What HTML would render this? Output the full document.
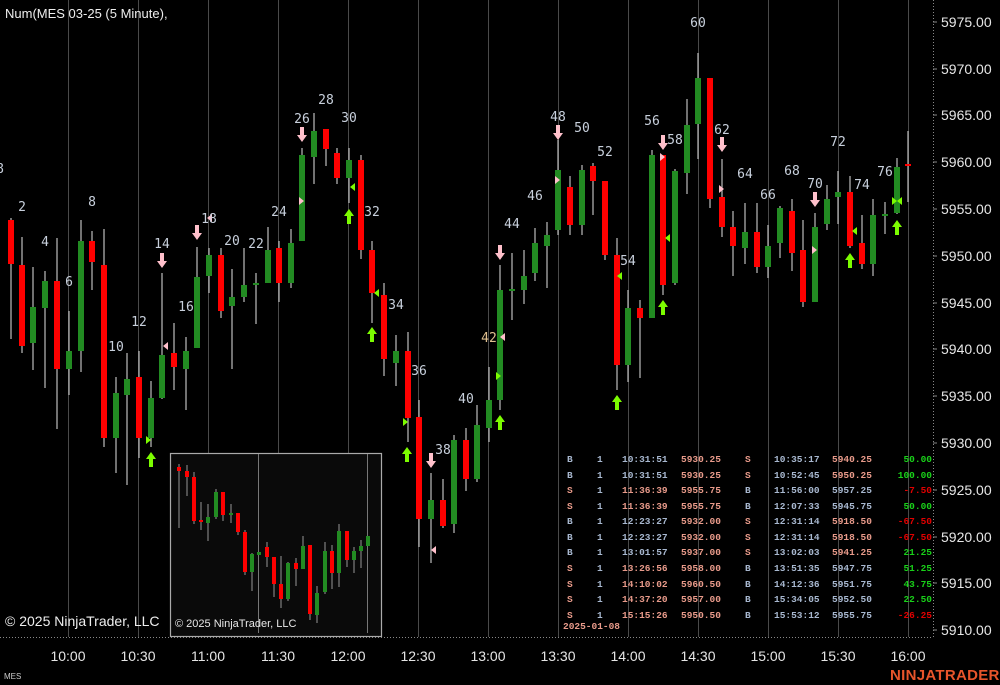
<!DOCTYPE html>
<html><head><meta charset="utf-8"><style>
html,body{margin:0;padding:0;background:#000;width:1000px;height:685px;overflow:hidden}
svg{display:block}
.l{font:13px "DejaVu Sans Mono","Liberation Mono",monospace;fill:#c8d0dc;text-anchor:middle}
.p{font:14px "Liberation Sans",sans-serif;fill:#e6e6e6}
.t{font:14px "Liberation Sans",sans-serif;fill:#e6e6e6;text-anchor:middle}
.tb{font:bold 9.5px "Liberation Mono",monospace}
.b{fill:#a8b8d0}.s{fill:#e89a8a}.g{fill:#19d019}.r{fill:#e00000}
</style></head><body>
<svg width="1000" height="685" viewBox="0 0 1000 685" xmlns="http://www.w3.org/2000/svg">
<defs>
<path id="dn" d="M-2,-8H2V0H5L0,7L-5,0H-2Z" fill="#ffc0cb"/>
<path id="up" d="M-2,8H2V0H5L0,-7L-5,0H-2Z" fill="#7cfc00"/>
<path id="rp" d="M0,-4L5,0L0,4Z"/>
<path id="lp" d="M0,-4L-5,0L0,4Z"/>
</defs>
<rect width="1000" height="685" fill="#000"/>
<g stroke="#4a4a4a" stroke-width="1">
<line x1="68.5" y1="0" x2="68.5" y2="637"/><line x1="138.5" y1="0" x2="138.5" y2="637"/><line x1="208.5" y1="0" x2="208.5" y2="637"/><line x1="278.5" y1="0" x2="278.5" y2="637"/><line x1="348.5" y1="0" x2="348.5" y2="637"/><line x1="418.5" y1="0" x2="418.5" y2="637"/><line x1="488.5" y1="0" x2="488.5" y2="637"/><line x1="558.5" y1="0" x2="558.5" y2="637"/><line x1="628.5" y1="0" x2="628.5" y2="637"/><line x1="698.5" y1="0" x2="698.5" y2="637"/><line x1="768.5" y1="0" x2="768.5" y2="637"/><line x1="838.5" y1="0" x2="838.5" y2="637"/><line x1="908.5" y1="0" x2="908.5" y2="637"/>
</g>
<g stroke="#bdbdbd" stroke-width="1.2">
<line x1="11" y1="218" x2="11" y2="339"/><line x1="22" y1="237" x2="22" y2="353"/><line x1="33" y1="267" x2="33" y2="370"/><line x1="45" y1="271" x2="45" y2="388"/><line x1="57" y1="238" x2="57" y2="429"/><line x1="69" y1="311" x2="69" y2="395"/><line x1="81" y1="220" x2="81" y2="372"/><line x1="92" y1="231" x2="92" y2="290"/><line x1="104" y1="229" x2="104" y2="447"/><line x1="116" y1="377" x2="116" y2="473"/><line x1="127" y1="353" x2="127" y2="485"/><line x1="139" y1="351" x2="139" y2="458"/><line x1="151" y1="381" x2="151" y2="447"/><line x1="162" y1="273" x2="162" y2="399"/><line x1="174" y1="323" x2="174" y2="390"/><line x1="186" y1="337" x2="186" y2="410"/><line x1="197" y1="247" x2="197" y2="348"/><line x1="209" y1="248" x2="209" y2="293"/><line x1="221" y1="248" x2="221" y2="318"/><line x1="232" y1="269" x2="232" y2="369"/><line x1="244" y1="248" x2="244" y2="302"/><line x1="256" y1="273" x2="256" y2="324"/><line x1="268" y1="227" x2="268" y2="283"/><line x1="279" y1="241" x2="279" y2="302"/><line x1="291" y1="229" x2="291" y2="288"/><line x1="302" y1="148" x2="302" y2="241"/><line x1="314" y1="113" x2="314" y2="184"/><line x1="326" y1="129" x2="326" y2="166"/><line x1="337" y1="148" x2="337" y2="184"/><line x1="349" y1="148" x2="349" y2="203"/><line x1="361" y1="155" x2="361" y2="259"/><line x1="372" y1="241" x2="372" y2="323"/><line x1="384" y1="283" x2="384" y2="376"/><line x1="396" y1="335" x2="396" y2="386"/><line x1="408" y1="332" x2="408" y2="442"/><line x1="419" y1="400" x2="419" y2="547"/><line x1="431" y1="473" x2="431" y2="563"/><line x1="443" y1="479" x2="443" y2="528"/><line x1="454" y1="435" x2="454" y2="533"/><line x1="466" y1="428" x2="466" y2="491"/><line x1="477" y1="405" x2="477" y2="482"/><line x1="489" y1="367" x2="489" y2="442"/><line x1="500" y1="265" x2="500" y2="410"/><line x1="512" y1="253" x2="512" y2="320"/><line x1="524" y1="250" x2="524" y2="304"/><line x1="535" y1="228" x2="535" y2="281"/><line x1="547" y1="222" x2="547" y2="288"/><line x1="558" y1="140" x2="558" y2="235"/><line x1="570" y1="176" x2="570" y2="235"/><line x1="582" y1="165" x2="582" y2="235"/><line x1="593" y1="163" x2="593" y2="215"/><line x1="605" y1="181" x2="605" y2="260"/><line x1="617" y1="238" x2="617" y2="390"/><line x1="628" y1="290" x2="628" y2="382"/><line x1="640" y1="300" x2="640" y2="378"/><line x1="652" y1="150" x2="652" y2="318"/><line x1="663" y1="155" x2="663" y2="295"/><line x1="675" y1="169" x2="675" y2="285"/><line x1="687" y1="99" x2="687" y2="194"/><line x1="698" y1="53" x2="698" y2="159"/><line x1="710" y1="78" x2="710" y2="208"/><line x1="722" y1="159" x2="722" y2="237"/><line x1="733" y1="211" x2="733" y2="276"/><line x1="745" y1="203" x2="745" y2="264"/><line x1="757" y1="203" x2="757" y2="273"/><line x1="768" y1="225" x2="768" y2="278"/><line x1="780" y1="206" x2="780" y2="258"/><line x1="792" y1="199" x2="792" y2="271"/><line x1="803" y1="220" x2="803" y2="307"/><line x1="815" y1="213" x2="815" y2="302"/><line x1="827" y1="185" x2="827" y2="230"/><line x1="838" y1="171" x2="838" y2="224"/><line x1="850" y1="176" x2="850" y2="248"/><line x1="862" y1="215" x2="862" y2="269"/><line x1="873" y1="199" x2="873" y2="276"/><line x1="885" y1="202" x2="885" y2="234"/><line x1="897" y1="158" x2="897" y2="214"/><line x1="908" y1="131" x2="908" y2="202"/>
</g>
<g>
<rect x="8" y="220" width="6" height="44" fill="#f00"/><rect x="19" y="265" width="6" height="81" fill="#f00"/><rect x="30" y="307" width="6" height="36" fill="#228b22"/><rect x="42" y="281" width="6" height="27" fill="#228b22"/><rect x="54" y="281" width="6" height="88" fill="#f00"/><rect x="66" y="351" width="6" height="18" fill="#228b22"/><rect x="78" y="241" width="6" height="110" fill="#228b22"/><rect x="89" y="241" width="6" height="21" fill="#f00"/><rect x="101" y="265" width="6" height="173" fill="#f00"/><rect x="113" y="393" width="6" height="45" fill="#228b22"/><rect x="124" y="379" width="6" height="16" fill="#228b22"/><rect x="136" y="377" width="6" height="61" fill="#f00"/><rect x="148" y="398" width="6" height="40" fill="#228b22"/><rect x="159" y="355" width="6" height="43" fill="#228b22"/><rect x="171" y="353" width="6" height="14" fill="#f00"/><rect x="183" y="351" width="6" height="18" fill="#228b22"/><rect x="194" y="277" width="6" height="71" fill="#228b22"/><rect x="206" y="255" width="6" height="21" fill="#228b22"/><rect x="218" y="255" width="6" height="56" fill="#f00"/><rect x="229" y="297" width="6" height="9" fill="#228b22"/><rect x="241" y="285" width="6" height="12" fill="#228b22"/><rect x="253" y="283" width="6" height="2" fill="#228b22"/><rect x="265" y="250" width="6" height="33" fill="#228b22"/><rect x="276" y="248" width="6" height="35" fill="#f00"/><rect x="288" y="243" width="6" height="40" fill="#228b22"/><rect x="299" y="155" width="6" height="86" fill="#228b22"/><rect x="311" y="131" width="6" height="26" fill="#228b22"/><rect x="323" y="129" width="6" height="20" fill="#f00"/><rect x="334" y="153" width="6" height="25" fill="#f00"/><rect x="346" y="160" width="6" height="18" fill="#228b22"/><rect x="358" y="160" width="6" height="90" fill="#f00"/><rect x="369" y="250" width="6" height="43" fill="#f00"/><rect x="381" y="295" width="6" height="64" fill="#f00"/><rect x="393" y="351" width="6" height="12" fill="#228b22"/><rect x="405" y="351" width="6" height="67" fill="#f00"/><rect x="416" y="417" width="6" height="102" fill="#f00"/><rect x="428" y="500" width="6" height="19" fill="#228b22"/><rect x="440" y="500" width="6" height="26" fill="#f00"/><rect x="451" y="440" width="6" height="84" fill="#228b22"/><rect x="463" y="440" width="6" height="39" fill="#f00"/><rect x="474" y="425" width="6" height="54" fill="#228b22"/><rect x="486" y="400" width="6" height="28" fill="#228b22"/><rect x="497" y="290" width="6" height="110" fill="#228b22"/><rect x="509" y="289" width="6" height="2" fill="#228b22"/><rect x="521" y="276" width="6" height="14" fill="#228b22"/><rect x="532" y="243" width="6" height="30" fill="#228b22"/><rect x="544" y="235" width="6" height="11" fill="#228b22"/><rect x="555" y="170" width="6" height="60" fill="#228b22"/><rect x="567" y="187" width="6" height="38" fill="#f00"/><rect x="579" y="170" width="6" height="55" fill="#228b22"/><rect x="590" y="166" width="6" height="15" fill="#f00"/><rect x="602" y="181" width="6" height="74" fill="#f00"/><rect x="614" y="255" width="6" height="110" fill="#f00"/><rect x="625" y="308" width="6" height="57" fill="#228b22"/><rect x="637" y="308" width="6" height="10" fill="#f00"/><rect x="649" y="155" width="6" height="163" fill="#228b22"/><rect x="660" y="155" width="6" height="130" fill="#f00"/><rect x="672" y="171" width="6" height="112" fill="#228b22"/><rect x="684" y="125" width="6" height="48" fill="#228b22"/><rect x="695" y="78" width="6" height="46" fill="#228b22"/><rect x="707" y="78" width="6" height="121" fill="#f00"/><rect x="719" y="197" width="6" height="30" fill="#f00"/><rect x="730" y="227" width="6" height="19" fill="#f00"/><rect x="742" y="232" width="6" height="16" fill="#228b22"/><rect x="754" y="232" width="6" height="35" fill="#f00"/><rect x="765" y="246" width="6" height="21" fill="#228b22"/><rect x="777" y="208" width="6" height="35" fill="#228b22"/><rect x="789" y="211" width="6" height="42" fill="#f00"/><rect x="800" y="250" width="6" height="52" fill="#f00"/><rect x="812" y="227" width="6" height="75" fill="#228b22"/><rect x="824" y="199" width="6" height="25" fill="#228b22"/><rect x="835" y="192" width="6" height="5" fill="#228b22"/><rect x="847" y="192" width="6" height="54" fill="#f00"/><rect x="859" y="243" width="6" height="21" fill="#f00"/><rect x="870" y="215" width="6" height="49" fill="#228b22"/><rect x="882" y="214" width="6" height="2" fill="#228b22"/><rect x="894" y="167" width="6" height="46" fill="#228b22"/><rect x="905" y="164" width="6" height="2" fill="#f00"/>
</g>
<!-- arrows -->
<use href="#dn" x="162" y="261"/><use href="#dn" x="197" y="233"/><use href="#dn" x="302" y="135"/><use href="#dn" x="431" y="461"/><use href="#dn" x="500" y="253"/><use href="#dn" x="558" y="133"/><use href="#dn" x="663" y="143"/><use href="#dn" x="722" y="145"/><use href="#dn" x="815" y="200"/>
<use href="#up" x="151" y="459"/><use href="#up" x="349" y="216"/><use href="#up" x="372" y="334"/><use href="#up" x="407" y="454"/><use href="#up" x="500" y="422"/><use href="#up" x="617" y="402"/><use href="#up" x="663" y="307"/><use href="#up" x="850" y="260"/><use href="#up" x="897" y="227"/>
<g fill="#ffc0cb"><use href="#rp" x="299" y="201"/><use href="#lp" x="168" y="346"/><use href="#lp" x="212" y="218"/><use href="#lp" x="505" y="337"/><use href="#lp" x="436" y="550"/><use href="#rp" x="555" y="180"/><use href="#rp" x="660" y="157"/><use href="#rp" x="719" y="189"/><use href="#rp" x="812" y="250"/></g>
<g fill="#7cfc00"><use href="#rp" x="146" y="440"/><use href="#lp" x="355" y="187"/><use href="#lp" x="379" y="293"/><use href="#rp" x="403" y="422"/><use href="#rp" x="496" y="376"/><use href="#lp" x="622" y="276"/><use href="#lp" x="670" y="238"/><use href="#lp" x="857" y="231"/><use href="#lp" x="902" y="201"/><use href="#rp" x="892" y="201"/></g>
<!-- bar labels -->
<g class="l">
<text x="0" y="173">8</text><text x="22" y="211">2</text><text x="45" y="246">4</text><text x="69" y="286">6</text><text x="92" y="206">8</text><text x="116" y="351">10</text><text x="139" y="326">12</text><text x="162" y="248">14</text><text x="186" y="311">16</text><text x="209" y="223">18</text><text x="232" y="245">20</text><text x="256" y="248">22</text><text x="279" y="216">24</text><text x="302" y="123">26</text><text x="326" y="104">28</text><text x="349" y="122">30</text><text x="372" y="216">32</text><text x="396" y="309">34</text><text x="419" y="375">36</text><text x="443" y="454">38</text><text x="466" y="403">40</text><text x="489" y="342" style="fill:#e0c090">42</text><text x="512" y="228">44</text><text x="535" y="200">46</text><text x="558" y="121">48</text><text x="582" y="132">50</text><text x="605" y="156">52</text><text x="628" y="265">54</text><text x="652" y="125">56</text><text x="675" y="144">58</text><text x="698" y="27">60</text><text x="722" y="134">62</text><text x="745" y="178">64</text><text x="768" y="199">66</text><text x="792" y="175">68</text><text x="815" y="188">70</text><text x="838" y="146">72</text><text x="862" y="189">74</text><text x="885" y="176">76</text>
</g>
<!-- inset -->
<rect x="170.5" y="453.5" width="211" height="183" fill="#0a0a0a" stroke="#aaa" stroke-width="1.2"/>
<g stroke="#777"><line x1="258.5" y1="454" x2="258.5" y2="633"/><line x1="367.5" y1="454" x2="367.5" y2="633"/></g>
<g stroke="#bbb" stroke-width="0.8">
<line x1="179" y1="464" x2="179" y2="528"/><line x1="187" y1="465" x2="187" y2="496"/><line x1="194" y1="472" x2="194" y2="524"/><line x1="201" y1="502" x2="201" y2="530"/><line x1="208" y1="504" x2="208" y2="541"/><line x1="216" y1="489" x2="216" y2="519"/><line x1="223" y1="492" x2="223" y2="521"/><line x1="231" y1="504" x2="231" y2="523"/><line x1="238" y1="513" x2="238" y2="535"/><line x1="245" y1="530" x2="245" y2="575"/><line x1="252" y1="553" x2="252" y2="591"/><line x1="259" y1="552" x2="259" y2="555"/><line x1="267" y1="542" x2="267" y2="567"/><line x1="274" y1="557" x2="274" y2="597"/><line x1="281" y1="556" x2="281" y2="608"/><line x1="288" y1="562" x2="288" y2="601"/><line x1="296" y1="558" x2="296" y2="586"/><line x1="303" y1="536" x2="303" y2="569"/><line x1="310" y1="545" x2="310" y2="620"/><line x1="317" y1="586" x2="317" y2="623"/><line x1="325" y1="542" x2="325" y2="594"/><line x1="332" y1="545" x2="332" y2="589"/><line x1="339" y1="524" x2="339" y2="587"/><line x1="347" y1="531" x2="347" y2="567"/><line x1="354" y1="547" x2="354" y2="573"/><line x1="361" y1="540" x2="361" y2="568"/>
</g>
<g>
<rect x="177" y="467" width="4" height="4" fill="#f00"/><rect x="185" y="471" width="4" height="6" fill="#f00"/><rect x="192" y="477" width="4" height="44" fill="#f00"/><rect x="199" y="520" width="4" height="2" fill="#f00"/><rect x="206" y="517" width="4" height="6" fill="#228b22"/><rect x="214" y="492" width="4" height="25" fill="#228b22"/><rect x="221" y="492" width="4" height="23" fill="#f00"/><rect x="229" y="513" width="4" height="2" fill="#228b22"/><rect x="236" y="513" width="4" height="19" fill="#f00"/><rect x="243" y="532" width="4" height="40" fill="#f00"/><rect x="250" y="554" width="4" height="18" fill="#228b22"/><rect x="257" y="552" width="4" height="3" fill="#228b22"/><rect x="265" y="547" width="4" height="10" fill="#f00"/><rect x="272" y="557" width="4" height="27" fill="#f00"/><rect x="279" y="584" width="4" height="15" fill="#f00"/><rect x="286" y="563" width="4" height="36" fill="#228b22"/><rect x="294" y="563" width="4" height="6" fill="#f00"/><rect x="301" y="546" width="4" height="23" fill="#228b22"/><rect x="308" y="545" width="4" height="69" fill="#f00"/><rect x="315" y="593" width="4" height="22" fill="#228b22"/><rect x="323" y="551" width="4" height="41" fill="#228b22"/><rect x="330" y="551" width="4" height="22" fill="#f00"/><rect x="337" y="531" width="4" height="42" fill="#228b22"/><rect x="345" y="531" width="4" height="29" fill="#f00"/><rect x="352" y="551" width="4" height="9" fill="#228b22"/><rect x="359" y="546" width="4" height="5" fill="#228b22"/><rect x="366" y="536" width="4" height="10" fill="#228b22"/>
</g>
<text x="175" y="627" style="font:11px 'Liberation Sans',sans-serif;fill:#e8e8e8">© 2025 NinjaTrader, LLC</text>
<!-- axes -->
<line x1="0" y1="637.5" x2="933" y2="637.5" stroke="#888" stroke-dasharray="1,2"/>
<line x1="933.5" y1="0" x2="933.5" y2="638" stroke="#888" stroke-dasharray="1,2"/>
<g stroke="#888"><line x1="933" y1="22" x2="937" y2="22"/><line x1="933" y1="69" x2="937" y2="69"/><line x1="933" y1="115" x2="937" y2="115"/><line x1="933" y1="162" x2="937" y2="162"/><line x1="933" y1="209" x2="937" y2="209"/><line x1="933" y1="256" x2="937" y2="256"/><line x1="933" y1="303" x2="937" y2="303"/><line x1="933" y1="349" x2="937" y2="349"/><line x1="933" y1="396" x2="937" y2="396"/><line x1="933" y1="443" x2="937" y2="443"/><line x1="933" y1="490" x2="937" y2="490"/><line x1="933" y1="537" x2="937" y2="537"/><line x1="933" y1="583" x2="937" y2="583"/><line x1="933" y1="630" x2="937" y2="630"/></g>
<g class="p">
<text x="941" y="27">5975.00</text><text x="941" y="74">5970.00</text><text x="941" y="120">5965.00</text><text x="941" y="167">5960.00</text><text x="941" y="214">5955.00</text><text x="941" y="261">5950.00</text><text x="941" y="308">5945.00</text><text x="941" y="354">5940.00</text><text x="941" y="401">5935.00</text><text x="941" y="448">5930.00</text><text x="941" y="495">5925.00</text><text x="941" y="542">5920.00</text><text x="941" y="588">5915.00</text><text x="941" y="635">5910.00</text>
</g>
<g class="t">
<text x="68" y="661">10:00</text><text x="138" y="661">10:30</text><text x="208" y="661">11:00</text><text x="278" y="661">11:30</text><text x="348" y="661">12:00</text><text x="418" y="661">12:30</text><text x="488" y="661">13:00</text><text x="558" y="661">13:30</text><text x="628" y="661">14:00</text><text x="698" y="661">14:30</text><text x="768" y="661">15:00</text><text x="838" y="661">15:30</text><text x="908" y="661">16:00</text>
</g>
<text x="5" y="18" style="font:13px 'Liberation Sans',sans-serif;fill:#eee">Num(MES 03-25 (5 Minute),</text>
<text x="5" y="626" style="font:14px 'Liberation Sans',sans-serif;fill:#eee">© 2025 NinjaTrader, LLC</text>
<text x="4" y="679" style="font:8px 'Liberation Sans',sans-serif;fill:#ccc">MES</text>
<text x="890" y="680" style="font:bold 15px 'Liberation Sans',sans-serif;fill:#e8552b;letter-spacing:0.3px">NINJATRADER</text>
<!-- trade table -->
<g class="tb">
<g transform="translate(0,462)"><text x="567" class="b">B</text><text x="597" class="b">1</text><text x="622" class="b">10:31:51</text><text x="681" class="s">5930.25</text><text x="745" class="s">S</text><text x="774" class="b">10:35:17</text><text x="832" class="s">5940.25</text><text x="932" text-anchor="end" class="g">50.00</text></g>
<g transform="translate(0,478)"><text x="567" class="b">B</text><text x="597" class="b">1</text><text x="622" class="b">10:31:51</text><text x="681" class="s">5930.25</text><text x="745" class="s">S</text><text x="774" class="b">10:52:45</text><text x="832" class="s">5950.25</text><text x="932" text-anchor="end" class="g">100.00</text></g>
<g transform="translate(0,493)"><text x="567" class="s">S</text><text x="597" class="b">1</text><text x="622" class="s">11:36:39</text><text x="681" class="s">5955.75</text><text x="745" class="b">B</text><text x="774" class="b">11:56:00</text><text x="832" class="b">5957.25</text><text x="932" text-anchor="end" class="r">-7.50</text></g>
<g transform="translate(0,509)"><text x="567" class="s">S</text><text x="597" class="b">1</text><text x="622" class="s">11:36:39</text><text x="681" class="s">5955.75</text><text x="745" class="b">B</text><text x="774" class="b">12:07:33</text><text x="832" class="b">5945.75</text><text x="932" text-anchor="end" class="g">50.00</text></g>
<g transform="translate(0,524)"><text x="567" class="b">B</text><text x="597" class="b">1</text><text x="622" class="b">12:23:27</text><text x="681" class="s">5932.00</text><text x="745" class="s">S</text><text x="774" class="b">12:31:14</text><text x="832" class="s">5918.50</text><text x="932" text-anchor="end" class="r">-67.50</text></g>
<g transform="translate(0,540)"><text x="567" class="b">B</text><text x="597" class="b">1</text><text x="622" class="b">12:23:27</text><text x="681" class="s">5932.00</text><text x="745" class="s">S</text><text x="774" class="b">12:31:14</text><text x="832" class="s">5918.50</text><text x="932" text-anchor="end" class="r">-67.50</text></g>
<g transform="translate(0,555)"><text x="567" class="b">B</text><text x="597" class="b">1</text><text x="622" class="b">13:01:57</text><text x="681" class="s">5937.00</text><text x="745" class="s">S</text><text x="774" class="b">13:02:03</text><text x="832" class="s">5941.25</text><text x="932" text-anchor="end" class="g">21.25</text></g>
<g transform="translate(0,571)"><text x="567" class="s">S</text><text x="597" class="b">1</text><text x="622" class="s">13:26:56</text><text x="681" class="s">5958.00</text><text x="745" class="b">B</text><text x="774" class="b">13:51:35</text><text x="832" class="b">5947.75</text><text x="932" text-anchor="end" class="g">51.25</text></g>
<g transform="translate(0,587)"><text x="567" class="s">S</text><text x="597" class="b">1</text><text x="622" class="s">14:10:02</text><text x="681" class="s">5960.50</text><text x="745" class="b">B</text><text x="774" class="b">14:12:36</text><text x="832" class="b">5951.75</text><text x="932" text-anchor="end" class="g">43.75</text></g>
<g transform="translate(0,602)"><text x="567" class="s">S</text><text x="597" class="b">1</text><text x="622" class="s">14:37:20</text><text x="681" class="s">5957.00</text><text x="745" class="b">B</text><text x="774" class="b">15:34:05</text><text x="832" class="b">5952.50</text><text x="932" text-anchor="end" class="g">22.50</text></g>
<g transform="translate(0,618)"><text x="567" class="s">S</text><text x="597" class="b">1</text><text x="622" class="s">15:15:26</text><text x="681" class="s">5950.50</text><text x="745" class="b">B</text><text x="774" class="b">15:53:12</text><text x="832" class="b">5955.75</text><text x="932" text-anchor="end" class="r">-26.25</text></g>
<text x="563" y="629" class="s">2025-01-08</text>
</g>
</svg>
</body></html>
